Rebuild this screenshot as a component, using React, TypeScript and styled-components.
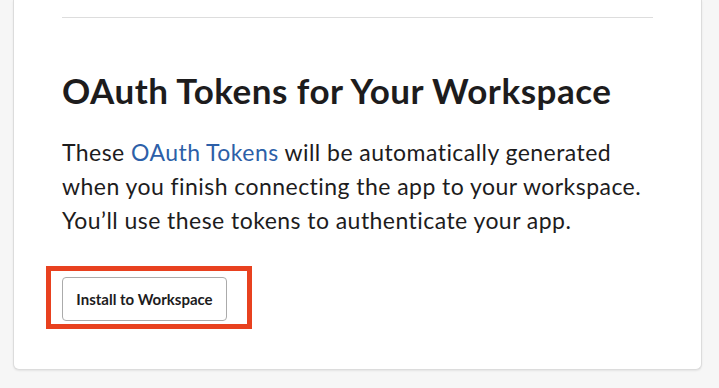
import styled, { createGlobalStyle } from "styled-components"

const GlobalStyle = createGlobalStyle`
  html, body {
    margin: 0;
    padding: 0;
    background-color: #f6f6f6;
    font-family: Lato, "Noto Sans", sans-serif;
    color: #1d1c1d;
  }
`

export default function App() {
  return (
    <>
      <GlobalStyle />
      <Page>
        <Card>
          <Divider />
          <Title>OAuth Tokens for Your Workspace</Title>
          <Description>
            These <Link href="#">OAuth Tokens</Link> will be automatically generated
            when you finish connecting the app to your workspace. You’ll use these
            tokens to authenticate your app.
          </Description>
          <ButtonWrapper>
            <InstallButton type="button">Install to Workspace</InstallButton>
            <Highlight />
          </ButtonWrapper>
        </Card>
      </Page>
    </>
  )
}

const Page = styled.div`
  padding: 0 17px 18px 13px;
`

const Card = styled.div`
  background-color: white;
  border: 1px solid #dcdcdc;
  border-top: none;
  border-radius: 0 0 6px 6px;
  box-shadow: 0 1px 2px rgba(0, 0, 0, 0.08);
  padding: 17px 48px 48px 48px;
  width: 591px;
`

const Divider = styled.hr`
  margin: 0;
  border: none;
  border-top: 1px solid #dddddd;
`

const Title = styled.h2`
  font-size: 35px;
  font-weight: 700;
  letter-spacing: 0.5px;
  line-height: 40px;
  margin: 52px 0 0 0;
  color: #1d1c1d;
`

const Description = styled.p`
  font-size: 23px;
  letter-spacing: 0.45px;
  line-height: 34px;
  margin: 25px 0 0 0;
  color: #1d1c1d;
`

const Link = styled.a`
  color: #2d5fa8;
  text-decoration: none;
`

const ButtonWrapper = styled.div`
  position: relative;
  display: flex;
  width: fit-content;
  margin-top: 40px;
`

const InstallButton = styled.button`
  font-family: Lato, "Noto Sans", sans-serif;
  font-size: 15px;
  font-weight: 700;
  color: #1d1c1d;
  background-color: white;
  border: 1px solid #ababab;
  border-radius: 4px;
  height: 44px;
  width: 165px;
  padding: 0;
  cursor: pointer;
`

const Highlight = styled.div`
  position: absolute;
  left: -16px;
  top: -11px;
  width: 196px;
  height: 53px;
  border: 5px solid #e8411f;
  pointer-events: none;
`
